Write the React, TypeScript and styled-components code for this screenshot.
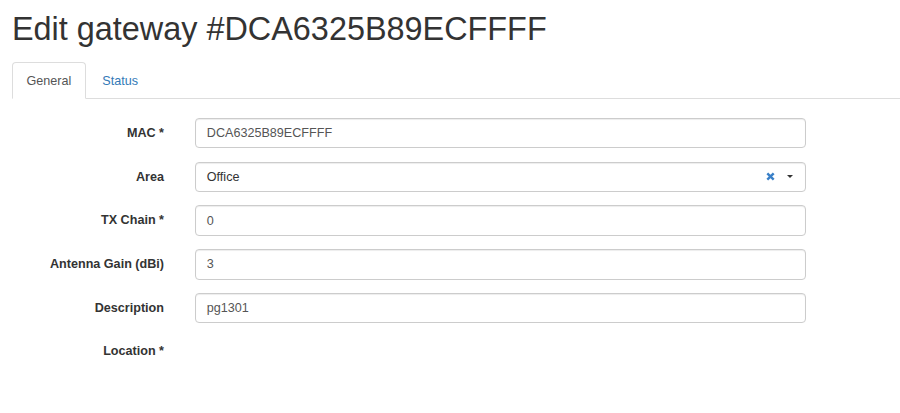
import React from "react";
import styled, { createGlobalStyle } from "styled-components";

const Global = createGlobalStyle`
  html, body { margin: 0; padding: 0; background: #fff; }
  body {
    font-family: "Liberation Sans", Arial, sans-serif;
    font-size: 12.6px;
    line-height: 1.42857;
    color: #333;
  }
  * { box-sizing: border-box; }
`;

const Page = styled.div`
  padding-left: 12px;
  width: 900px;
`;

const Title = styled.h1`
  margin: 11px 0 15px 0;
  font-size: 32.4px;
  line-height: 36px;
  font-weight: 500;
  color: #333;
`;

const Tabs = styled.ul`
  list-style: none;
  margin: 0;
  padding: 0;
  display: flex;
  border-bottom: 1px solid #ddd;
  height: 37px;
`;

const Tab = styled.li<{ $active?: boolean }>`
  margin-bottom: -1px;
  margin-right: 2px;
  padding: 9px 13.5px;
  line-height: 18px;
  height: 37px;
  border: 1px solid ${(p) => (p.$active ? "#ddd" : "transparent")};
  border-bottom-color: ${(p) => (p.$active ? "#fff" : "transparent")};
  border-radius: 4px 4px 0 0;
  background: ${(p) => (p.$active ? "#fff" : "transparent")};
  color: ${(p) => (p.$active ? "#555" : "#337ab7")};
  cursor: pointer;
`;

const Form = styled.form`
  padding-top: 19px;
  display: flex;
  flex-direction: column;
  gap: 13.35px;
`;

const Row = styled.div`
  display: flex;
  align-items: flex-start;
  height: 30.4px;
`;

const Label = styled.label`
  width: 152px;
  text-align: right;
  font-weight: bold;
  line-height: 18px;
  padding-top: 5.8px;
  color: #333;
  flex-shrink: 0;
`;

const Field = styled.div`
  margin-left: 31px;
  width: 611px;
  height: 30.4px;
  border: 1px solid #ccc;
  border-radius: 4px;
  box-shadow: inset 0 1px 1px rgba(0, 0, 0, 0.075);
  padding: 5.4px 10.8px;
  line-height: 18px;
  color: #555;
  display: flex;
  align-items: center;
`;

const Value = styled.span`
  flex: 1;
`;

const SelectValue = styled.span`
  flex: 1;
  color: #333;
`;

const Clear = styled.span`
  display: inline-flex;
  margin-right: 12px;
`;

const Caret = styled.span`
  width: 0;
  height: 0;
  border-left: 3px solid transparent;
  border-right: 3px solid transparent;
  border-top: 3px solid #333;
  margin-right: 1px;
`;

const ClearIcon = () => (
  <svg width="9" height="9" viewBox="0 0 9 9">
    <path d="M1.3 1.3 L7.7 7.7 M7.7 1.3 L1.3 7.7" stroke="#3a80c8" strokeWidth="2.4" strokeLinecap="butt" />
  </svg>
);

const textRows: { label: string; value: string }[] = [
  { label: "TX Chain *", value: "0" },
  { label: "Antenna Gain (dBi)", value: "3" },
  { label: "Description", value: "pg1301" },
];

export default function App() {
  return (
    <>
      <Global />
      <Page>
        <Title>Edit gateway #DCA6325B89ECFFFF</Title>
        <Tabs>
          <Tab $active>General</Tab>
          <Tab>Status</Tab>
        </Tabs>
        <Form>
          <Row>
            <Label>MAC *</Label>
            <Field>
              <Value>DCA6325B89ECFFFF</Value>
            </Field>
          </Row>
          <Row>
            <Label>Area</Label>
            <Field>
              <SelectValue>Office</SelectValue>
              <Clear>
                <ClearIcon />
              </Clear>
              <Caret />
            </Field>
          </Row>
          {textRows.map((r) => (
            <Row key={r.label}>
              <Label>{r.label}</Label>
              <Field>
                <Value>{r.value}</Value>
              </Field>
            </Row>
          ))}
          <Row>
            <Label>Location *</Label>
          </Row>
        </Form>
      </Page>
    </>
  );
}
